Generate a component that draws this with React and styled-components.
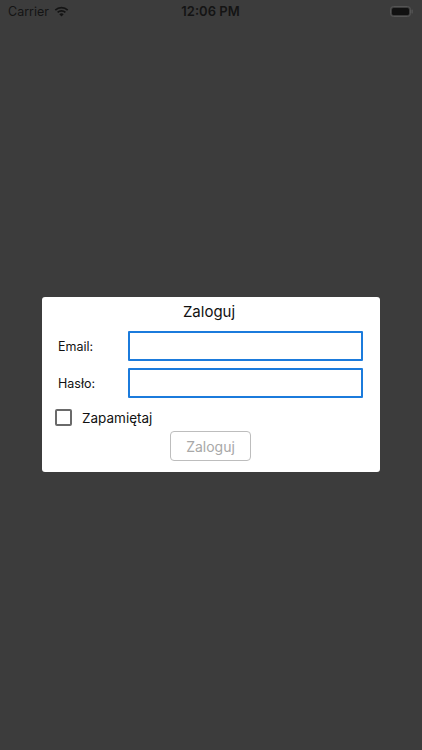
import React from 'react'
import styled, { createGlobalStyle } from 'styled-components'

const GlobalStyle = createGlobalStyle`
  html, body {
    margin: 0;
    padding: 0;
    background: #3c3c3c;
  }
  body {
    font-family: Inter, "Liberation Sans", sans-serif;
  }
`

const Screen = styled.div`
  width: 422px;
  height: 750px;
  background: #3c3c3c;
  display: flex;
  flex-direction: column;
`

const StatusBar = styled.div`
  height: 22px;
  display: grid;
  grid-template-columns: 1fr auto 1fr;
  align-items: center;
  padding: 0 9px 0 8px;
  color: #141414;
  font-size: 12.5px;
`

const Carrier = styled.div`
  display: flex;
  align-items: center;
  gap: 5px;
`

const Time = styled.div`
  font-weight: 600;
  font-size: 13px;
`

const Battery = styled.div`
  justify-self: end;
  display: flex;
  align-items: center;
`

const Middle = styled.div`
  flex: 1;
  display: flex;
  justify-content: center;
  padding-top: 275px;
`

const Card = styled.div`
  width: 338px;
  height: 175px;
  box-sizing: border-box;
  background: #fff;
  border-radius: 3px;
  padding: 5px 17px 0 13px;
  display: flex;
  flex-direction: column;
`

const Title = styled.div`
  text-align: center;
  font-size: 15px;
  color: #111;
  line-height: 19px;
`

const FieldRow = styled.div`
  display: grid;
  grid-template-columns: 70px 1fr;
  align-items: center;
  margin-top: ${p => p.top}px;
  padding-left: 3px;
`

const Label = styled.label`
  font-size: 12.5px;
  color: #111;
`

const Input = styled.input`
  height: 30px;
  box-sizing: border-box;
  border: 2px solid #1b7bdc;
  border-radius: 1px;
  outline: none;
  padding: 0 6px;
  font-size: 13px;
`

const CheckRow = styled.div`
  display: flex;
  align-items: center;
  gap: 10px;
  margin-top: 11px;
`

const Box = styled.span`
  width: 17px;
  height: 17px;
  box-sizing: border-box;
  border: 2px solid #6a6a6a;
  border-radius: 2px;
`

const CheckLabel = styled.span`
  font-size: 13.5px;
  color: #111;
`

const Button = styled.button`
  align-self: center;
  margin-top: 5px;
  width: 81px;
  height: 30px;
  background: #fff;
  border: 1px solid #bdbdbd;
  border-radius: 4px;
  color: #a8a8a8;
  font-family: inherit;
  font-size: 14px;
  margin-left: 3px;
`

export default function App() {
  return (
    <>
      <GlobalStyle />
      <Screen>
        <StatusBar>
          <Carrier>
            Carrier
            <svg width="15" height="11" viewBox="0 0 15 11">
              <path d="M7.5 10.5 L5.3 8.2 A3.2 3.2 0 0 1 9.7 8.2 Z" fill="#141414" />
              <path d="M3.6 6.4 A5.6 5.6 0 0 1 11.4 6.4" stroke="#141414" strokeWidth="1.7" fill="none" />
              <path d="M1.3 4.1 A8.9 8.9 0 0 1 13.7 4.1" stroke="#141414" strokeWidth="1.7" fill="none" />
            </svg>
          </Carrier>
          <Time>12:06 PM</Time>
          <Battery>
            <svg width="23" height="11" viewBox="0 0 23 11">
              <rect x="0.5" y="0.5" width="20" height="10" rx="3" fill="none" stroke="#555" strokeWidth="1" />
              <rect x="2" y="2" width="17" height="7" rx="1.5" fill="#111" />
              <rect x="21.5" y="3.5" width="1.3" height="4" rx="0.6" fill="#555" />
            </svg>
          </Battery>
        </StatusBar>
        <Middle>
          <Card>
            <Title>Zaloguj</Title>
            <FieldRow top={10}>
              <Label>Email:</Label>
              <Input type="text" />
            </FieldRow>
            <FieldRow top={7}>
              <Label>Hasło:</Label>
              <Input type="password" />
            </FieldRow>
            <CheckRow>
              <Box />
              <CheckLabel>Zapamiętaj</CheckLabel>
            </CheckRow>
            <Button>Zaloguj</Button>
          </Card>
        </Middle>
      </Screen>
    </>
  )
}
